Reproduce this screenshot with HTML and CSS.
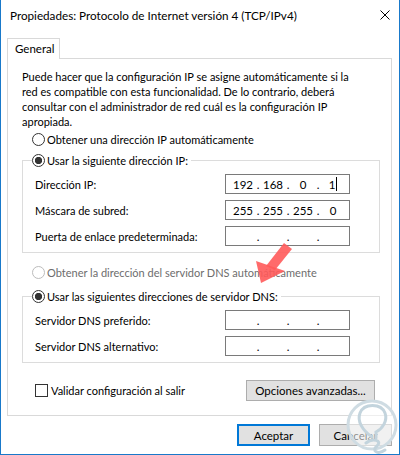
FILE: index.html
```html
<!DOCTYPE html>
<html lang="es">
<head>
<meta charset="utf-8">
<title>Propiedades: Protocolo de Internet versión 4 (TCP/IPv4)</title>
<link rel="stylesheet" href="styles.css">
</head>
<body>
<div class="window">
  <div class="titlebar">
    <span class="title">Propiedades: Protocolo de Internet versión 4 (TCP/IPv4)</span>
    <svg class="close" width="10" height="10" viewBox="0 0 10 10"><path d="M0.5 0.5L9.5 9.5M9.5 0.5L0.5 9.5" stroke="#000" stroke-width="1" fill="none"/></svg>
  </div>
  <div class="tabs"><div class="tab">General</div></div>
  <div class="panel">
    <p class="intro">Puede hacer que la configuración IP se asigne automáticamente si la<br>red es compatible con esta funcionalidad. De lo contrario, deberá<br>consultar con el administrador de red cuál es la configuración IP<br>apropiada.</p>
    <div class="option"><span class="radio"></span>Obtener una dirección IP automáticamente</div>
    <fieldset class="group">
      <legend class="legend"><span class="radio checked"></span>Usar la siguiente dirección IP:</legend>
      <div class="field"><span class="label">Dirección IP:</span>
        <div class="ipbox"><span class="oct">192</span><span class="dot">.</span><span class="oct">168</span><span class="dot">.</span><span class="oct">0</span><span class="dot">.</span><span class="oct">1<span class="caret"></span></span></div>
      </div>
      <div class="field"><span class="label">Máscara de subred:</span>
        <div class="ipbox"><span class="oct">255</span><span class="dot">.</span><span class="oct">255</span><span class="dot">.</span><span class="oct">255</span><span class="dot">.</span><span class="oct">0</span></div>
      </div>
      <div class="field"><span class="label">Puerta de enlace predeterminada:</span>
        <div class="ipbox"><span class="oct"></span><span class="dot">.</span><span class="oct"></span><span class="dot">.</span><span class="oct"></span><span class="dot">.</span><span class="oct"></span></div>
      </div>
    </fieldset>
    <div class="option disabled spaced"><span class="radio"></span>Obtener la dirección del servidor DNS automáticamente</div>
    <fieldset class="group group-dns">
      <legend class="legend"><span class="radio checked"></span>Usar las siguientes direcciones de servidor DNS:</legend>
      <div class="field first-dns"><span class="label">Servidor DNS preferido:</span>
        <div class="ipbox"><span class="oct"></span><span class="dot">.</span><span class="oct"></span><span class="dot">.</span><span class="oct"></span><span class="dot">.</span><span class="oct"></span></div>
      </div>
      <div class="field"><span class="label">Servidor DNS alternativo:</span>
        <div class="ipbox"><span class="oct"></span><span class="dot">.</span><span class="oct"></span><span class="dot">.</span><span class="oct"></span><span class="dot">.</span><span class="oct"></span></div>
      </div>
    </fieldset>
    <div class="actions">
      <label class="check"><span class="checkbox"></span>Validar configuración al salir</label>
      <button class="btn wide">Opciones avanzadas...</button>
    </div>
  </div>
  <div class="footer">
    <button class="btn default">Aceptar</button>
    <button class="btn">Cancelar</button>
  </div>
</div>
<svg class="overlay" width="400" height="455" viewBox="0 0 400 455">
  <g class="arrow">
    <polygon points="261,283 256,261 285,271" fill="#ff5a5a" fill-opacity="0.9"/>
    <polygon points="266,266 275,270 292,249 284,243" fill="#ff5a5a" fill-opacity="0.9"/>
  </g>
  <g class="mark">
    <circle cx="372" cy="425" r="24" fill="#ffffff" fill-opacity="0.55" stroke="#cfdce3" stroke-width="3"/>
    <path d="M372 437 C362 430 357 421 360 413 C364 403 381 403 385 413 C388 421 382 429 376 432 L376 438" fill="none" stroke="#c3d4dd" stroke-width="3" stroke-linecap="round"/>
    <path d="M366 443 C372 438 383 440 377 446 C371 451 378 455 385 450" fill="none" stroke="#c3d4dd" stroke-width="3" stroke-linecap="round"/>
  </g>
</svg>
</body>
</html>
```

FILE: styles.css
```css
* { box-sizing: border-box; }
html, body { margin: 0; padding: 0; background: #ffffff; }
body {
  font-family: Lato, "Noto Sans", sans-serif;
  font-size: 11px;
  line-height: 15px;
  color: #000000;
}
.window {
  width: 400px;
  height: 455px;
  border: 1px solid #1979ca;
  border-top: 0;
  display: flex;
  flex-direction: column;
  overflow: hidden;
  background: #ffffff;
  white-space: nowrap;
}
.titlebar {
  height: 30px;
  flex: none;
  display: flex;
  align-items: center;
  justify-content: space-between;
  padding: 0 9px 0 9px;
}
.title { font-size: 11.7px; }
.close { display: block; }
.tabs {
  display: flex;
  margin: 8px 0 0 6px;
  flex: none;
}
.tab {
  position: relative;
  z-index: 1;
  width: 53px;
  height: 21px;
  margin-bottom: -1px;
  padding-left: 7px;
  border: 1px solid #d9d9d9;
  border-bottom: 0;
  background: #ffffff;
  line-height: 19px;
  font-size: 11.5px;
}
.panel {
  flex: none;
  margin: 0 7px 0 6px;
  border: 1px solid #d9d9d9;
  padding: 10px 11px 14px 14px;
}
.intro { margin: 0; }
.option {
  display: flex;
  align-items: center;
  height: 15px;
  margin: 3px 0 0 10px;
}
.option.spaced { margin-top: 12px; }
.option.disabled { color: #6d6d6d; }
.option.disabled .radio { border-color: #bcbcbc; }
.radio {
  display: inline-block;
  flex: none;
  width: 13px;
  height: 13px;
  border: 1px solid #333333;
  border-radius: 50%;
  margin-right: 2px;
  background: #ffffff;
}
.radio.checked { background: radial-gradient(circle, #333333 0, #333333 3.4px, #ffffff 3.9px); }
.group {
  margin: 6px 0 0 0;
  padding: 0 29px 6px 12px;
  border: 1px solid #dcdcdc;
  min-width: 0;
}
.group-dns { margin-top: 9px; }
.legend {
  display: flex;
  align-items: center;
  height: 15px;
  margin-left: -3px;
  padding: 0 3px 0 0;
}
.field {
  display: flex;
  align-items: center;
  justify-content: space-between;
  height: 20px;
  margin-top: 6px;
}
.ipbox {
  flex: none;
  width: 125px;
  height: 20px;
  border: 1px solid #7a7a7a;
  padding-left: 4px;
  display: flex;
  align-items: center;
  font-size: 11.5px;
}
.oct { width: 26px; display: flex; justify-content: center; align-items: center; }
.dot { width: 4px; text-align: center; }
.caret {
  display: inline-block;
  width: 1px;
  height: 14px;
  background: #000000;
  margin-left: 1px;
}
.actions {
  display: flex;
  align-items: center;
  justify-content: space-between;
  margin-top: 17px;
  padding: 0 5px 0 13px;
}
.check { display: flex; align-items: center; }
.checkbox {
  width: 13px;
  height: 13px;
  border: 1px solid #333333;
  margin-right: 3px;
  background: #ffffff;
}
.btn {
  font: inherit;
  font-size: 11.5px;
  color: #000000;
  background: #e1e1e1;
  border: 1px solid #adadad;
  height: 22px;
  width: 73px;
  padding: 0;
}
.btn.wide { width: 129px; height: 21px; }
.btn.default { border: 2px solid #0078d7; }
.footer {
  display: flex;
  justify-content: flex-end;
  gap: 9px;
  margin-top: 8px;
  padding-right: 7px;
}
.overlay { position: absolute; left: 0; top: 0; pointer-events: none; }
```
